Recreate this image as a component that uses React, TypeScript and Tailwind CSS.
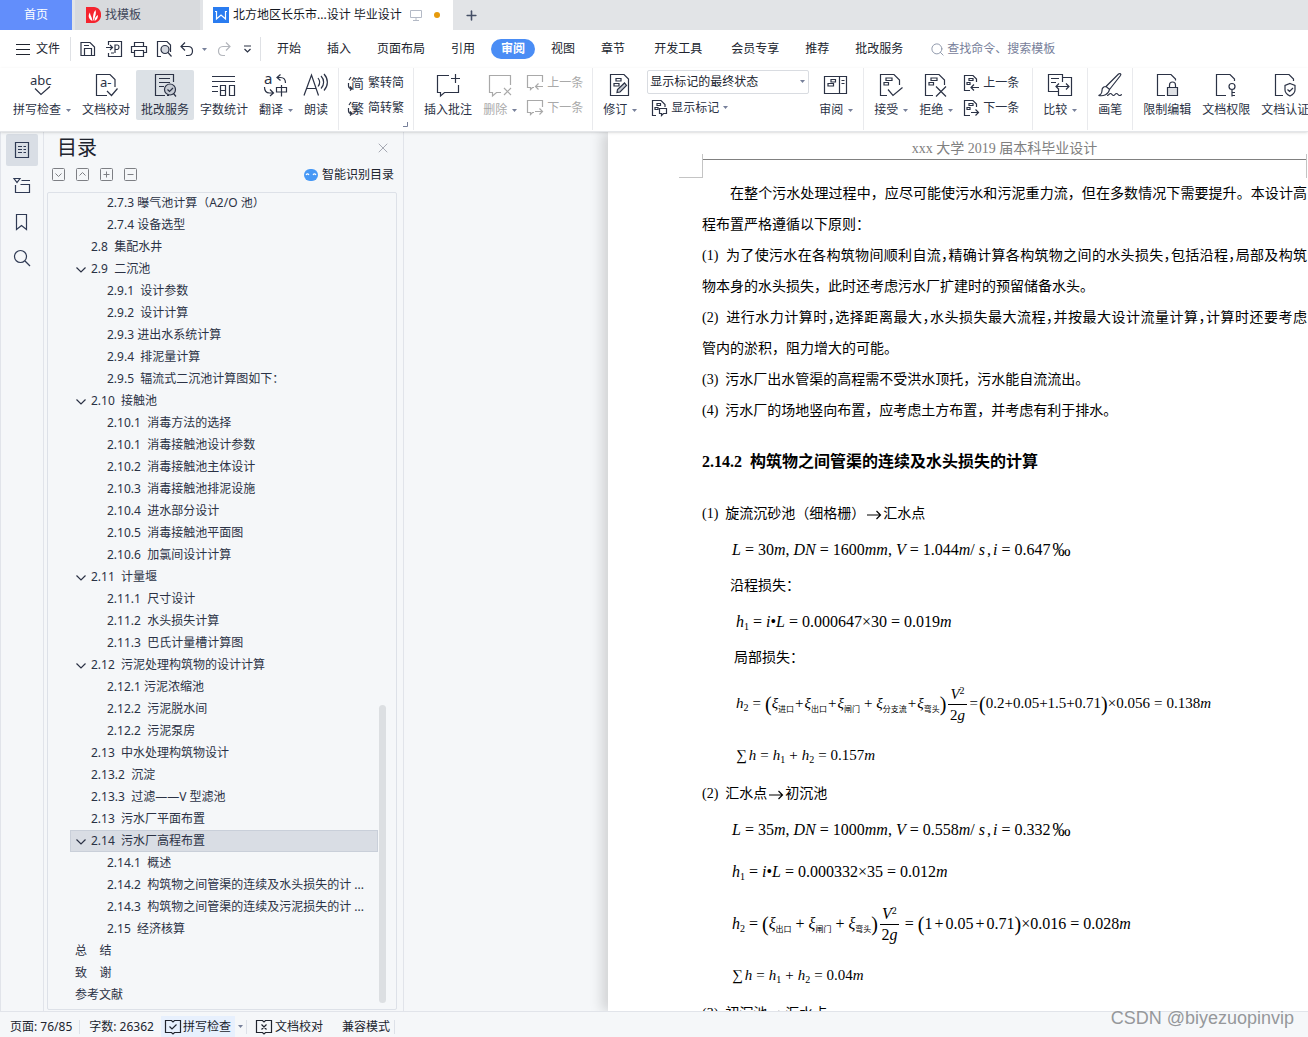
import { useState } from "react";
import type { ReactNode } from "react";
import { Plus, Search, X } from "lucide-react";
import clsx from "clsx";

type OutlineItem = {
  text: string;
  level: 0 | 1 | 2;
  open?: boolean;
};

const outline: OutlineItem[] = [
  { text: "2.7.3 曝气池计算（A2/O 池）", level: 2 },
  { text: "2.7.4 设备选型", level: 2 },
  { text: "2.8  集配水井", level: 1 },
  { text: "2.9  二沉池", level: 1, open: true },
  { text: "2.9.1  设计参数", level: 2 },
  { text: "2.9.2  设计计算", level: 2 },
  { text: "2.9.3 进出水系统计算", level: 2 },
  { text: "2.9.4  排泥量计算", level: 2 },
  { text: "2.9.5  辐流式二沉池计算图如下：", level: 2 },
  { text: "2.10  接触池", level: 1, open: true },
  { text: "2.10.1  消毒方法的选择", level: 2 },
  { text: "2.10.1  消毒接触池设计参数", level: 2 },
  { text: "2.10.2  消毒接触池主体设计", level: 2 },
  { text: "2.10.3  消毒接触池排泥设施", level: 2 },
  { text: "2.10.4  进水部分设计", level: 2 },
  { text: "2.10.5  消毒接触池平面图", level: 2 },
  { text: "2.10.6  加氯间设计计算", level: 2 },
  { text: "2.11  计量堰", level: 1, open: true },
  { text: "2.11.1  尺寸设计", level: 2 },
  { text: "2.11.2  水头损失计算", level: 2 },
  { text: "2.11.3  巴氏计量槽计算图", level: 2 },
  { text: "2.12  污泥处理构筑物的设计计算", level: 1, open: true },
  { text: "2.12.1 污泥浓缩池", level: 2 },
  { text: "2.12.2  污泥脱水间", level: 2 },
  { text: "2.12.2  污泥泵房", level: 2 },
  { text: "2.13  中水处理构筑物设计", level: 1 },
  { text: "2.13.2  沉淀", level: 1 },
  { text: "2.13.3  过滤——V 型滤池", level: 1 },
  { text: "2.13  污水厂平面布置", level: 1 },
  { text: "2.14  污水厂高程布置", level: 1, open: true },
  { text: "2.14.1  概述", level: 2 },
  { text: "2.14.2  构筑物之间管渠的连续及水头损失的计 ...", level: 2 },
  { text: "2.14.3  构筑物之间管渠的连续及污泥损失的计 ...", level: 2 },
  { text: "2.15  经济核算", level: 2 },
  { text: "总    结", level: 0 },
  { text: "致    谢", level: 0 },
  { text: "参考文献", level: 0 },
];

const levelPadding = { 0: "pl-1", 1: "pl-5", 2: "pl-9" };

const menuTabs = [
  "开始",
  "插入",
  "页面布局",
  "引用",
  "审阅",
  "视图",
  "章节",
  "开发工具",
  "会员专享",
  "推荐",
  "批改服务",
];

// full lines run to the right margin, like justified print
const paragraphs = [
  { text: "在整个污水处理过程中，应尽可能使污水和污泥重力流，但在多数情况下需要提升。本设计高", full: true, indent: true },
  { text: "程布置严格遵循以下原则：" },
  { text: "(1)\u00a0 为了使污水在各构筑物间顺利自流，精确计算各构筑物之间的水头损失，包括沿程，局部及构筑", full: true, tight: true },
  { text: "物本身的水头损失，此时还考虑污水厂扩建时的预留储备水头。" },
  { text: "(2)\u00a0 进行水力计算时，选择距离最大，水头损失最大流程，并按最大设计流量计算，计算时还要考虑", full: true, tight: true },
  { text: "管内的淤积，阻力增大的可能。" },
  { text: "(3)\u00a0 污水厂出水管渠的高程需不受洪水顶托，污水能自流流出。" },
  { text: "(4)\u00a0 污水厂的场地竖向布置，应考虑土方布置，并考虑有利于排水。" },
];

/* ---------- icons ---------- */

function Icon({ size = 24, children, className }: { size?: number; children: ReactNode; className?: string }) {
  return (
    <svg
      width={size}
      height={size}
      viewBox={`0 0 ${size} ${size}`}
      fill="none"
      stroke="currentColor"
      strokeWidth={1.2}
      className={clsx("shrink-0 overflow-visible", className)}
      aria-hidden="true"
    >
      {children}
    </svg>
  );
}

function Caret() {
  return (
    <svg width="5" height="3" viewBox="0 0 5 3" className="shrink-0 fill-[#77809a]" aria-hidden="true">
      <path d="M0 0h5L2.5 3z" />
    </svg>
  );
}

const SpellIcon = () => (
  <Icon>
    <text x="0" y="12" fontSize="13" fill="currentColor" stroke="none" fontFamily="Noto Sans">
      abc
    </text>
    <path d="M5 15.5l6 6 9-8" />
  </Icon>
);

const ProofIcon = () => (
  <Icon>
    <path d="M13 22.5H2.5v-21H16l5 5V14M13 18l4.500 4.500 6-7" />
    <text x="6" y="14" fontSize="13" fill="currentColor" stroke="none" fontFamily="Noto Sans">
      a-
    </text>
  </Icon>
);

const ReviewServiceIcon = () => (
  <Icon>
    <path d="M12 22.5H2.5v-21h18V9M6 5.500h11M6 9.500h11M6 13.500h5" />
    <circle cx="17" cy="16.500" r="5.500" fill="#c5cad2" />
    <path d="M14.500 16.500l2 2 3.500-3.500M20.500 20.500l2.500 3M14 22.500h2" />
  </Icon>
);

const WordCountIcon = () => (
  <Icon>
    <path d="M0 3.500h23M0 8.500h23M0 13.500h6M0 18.500h6M8.500 12.500h5v10h-5zM8.500 17.500h5M17.500 12.500h5v10h-5z" />
  </Icon>
);

const TranslateIcon = () => (
  <Icon>
    <text x="0" y="11" fontSize="15" fill="currentColor" stroke="none" fontFamily="Noto Sans">
      a
    </text>
    <path d="M16.500 1.500l-3.500 3 3.500 3M13 4.500h3.500c3 0 5 2 5 5.500M.5 14c0 4 2 6 5 6H9M6 16.500L9.500 20 6 23" />
    <path d="M12.500 14.500h10v4.500h-10zM17.500 12v11.500" />
  </Icon>
);

const ReadIcon = () => (
  <Icon>
    <path d="M0 22.500L7.500 2l7 20.500M2.500 15.500H12M14 5c2 2.500 2 6 0 8.500M17 3c3.500 3.500 3.500 9 0 12.500M20 1c4.500 5 4.500 11.500 0 16.500" />
  </Icon>
);

function ConvertIcon({ glyph }: { glyph: string }) {
  return (
    <Icon size={16}>
      <text x="3" y="13" fontSize="13" fill="currentColor" stroke="none" fontFamily="Noto Sans CJK SC">
        {glyph}
      </text>
      <path d="M.5 8v3c0 2 1 2.500 3 2.500M2 11.500l2 2-2 2M3 2L1 5" />
    </Icon>
  );
}

const CommentAddIcon = () => (
  <Icon>
    <path d="M13 2.500H1.500v17H4.500v3.500l4-3.500h14V12M19.500 1v9M15 5.500h9" />
  </Icon>
);

const CommentDeleteIcon = () => (
  <Icon>
    <path d="M13 19.500H8.500l-4 3.500v-3.500h-3v-17h21V12M16 15l7 7M23 15l-7 7" />
  </Icon>
);

const CommentPrevIcon = () => (
  <Icon size={16}>
    <path d="M7 12.500H5.500l-2 2v-2h-3v-12h15V7M16 11.500H8.500M11.500 8.500l-3 3 3 3" />
  </Icon>
);

const CommentNextIcon = () => (
  <Icon size={16}>
    <path d="M7 12.500H5.500l-2 2v-2h-3v-12h15V7M8 11.500h7.500M12.500 8.500l3 3-3 3" />
  </Icon>
);

const TrackIcon = () => (
  <Icon>
    <path d="M2.500 1.500H16l4.500 4.500v16.500h-18zM8 5.500h5v2.500H8zM6 10.500h5V13H6z" />
    <path d="M9 19.500l.5-3 7-6.500 2 2.500-6.500 6.500z" fill="#c5cad2" />
  </Icon>
);

const ShowMarksIcon = () => (
  <Icon size={16}>
    <path d="M5 15.500H1.500v-15H10l4 4V7M6 3.500h3.500v2H6zM4 7.500h3v2H4zM8.500 8.500h7v5h-3l-2 2v-2h-2z" />
  </Icon>
);

const PaneIcon = () => (
  <Icon>
    <path d="M.5 3.500h22v17H.5zM15.500 3.500v17M17.500 7.500h3M17.500 10.500h3M7 6.500h4.500v2.500H7zM4 10.500h5.500V13H4z" />
  </Icon>
);

const AcceptIcon = () => (
  <Icon>
    <path d="M8 22.500H1.500v-21H15l5.500 5.500v5M9 16.500l5 6 9.500-8" />
    <path d="M7 5h6v2.500H7zM5 9.500h4.500V12H5z" />
  </Icon>
);

const RejectIcon = () => (
  <Icon>
    <path d="M9 22.500H1.500v-21H15l5.500 5.500v5M12 13.500l10 10M22 13.500l-10 10" />
    <path d="M7 5h6v2.500H7zM5 9.500h4.500V12H5z" />
  </Icon>
);

const PrevChangeIcon = () => (
  <Icon size={16}>
    <path d="M7 15.500H1.500V.5H10l3.500 3.500v3M6 3.500h4v2H6zM4 7.500h3v2H4zM16 12.500H8.500M11 9.500l-3 3 3 3" />
  </Icon>
);

const NextChangeIcon = () => (
  <Icon size={16}>
    <path d="M7 15.500H1.500V.5H10l3.500 3.500v3M6 3.500h4v2H6zM4 7.500h3v2H4zM8 12.500h7.500M12.500 9.500l3 3-3 3" />
  </Icon>
);

const CompareIcon = () => (
  <Icon>
    <path d="M10 18.500H.5v-17h14V9M14.500 4.500h9v18h-13v-7M3 5.500h8M3 9.500h5M8 13.500h13M11 10.500l-3 3 3 3M18 10.500l3 3-3 3" />
  </Icon>
);

const BrushIcon = () => (
  <Icon>
    <path d="M8 13.500L20.500 1c1.500-1 3 0 2 1.500L11.500 16.500zM8 13.500c-3 0-4 2-4 4s-1.500 4.500-3.500 5c5 1 10-1 11-6M9 22.500c2 0 2-2 3.500-2s1.500 2 3 2 1.500-2 3-2 1.500 2 3 2 1.500-1 2.500-1" />
  </Icon>
);

const LockDocIcon = () => (
  <Icon>
    <path d="M10 22.500H2.500v-21H16l4.500 4.500v1.500" />
    <path d="M14.500 14.500V12c0-4 6-4 6 0v2.500" />
    <path d="M12.500 14.500h10v8h-10z" fill="#dfe1e5" />
  </Icon>
);

const KeyDocIcon = () => (
  <Icon>
    <path d="M12 22.500H2.500v-21H16l4.500 4.500V8M18 17v6.500M18 19.500h3M18 22.500h3" />
    <circle cx="18" cy="13.500" r="3" />
  </Icon>
);

const ShieldDocIcon = () => (
  <Icon>
    <path d="M10 22.500H2.500v-21H16l4.500 4.500V8" />
    <path d="M17 10.500l5 2v4.500c0 3-2 4.500-5 6-3-1.500-5-3-5-6v-4.500zM14.500 16.500l2 2 3.500-3.500" />
  </Icon>
);

/* ---------- ribbon parts ---------- */

type RibbonButtonProps = {
  icon: ReactNode;
  label: string;
  caret?: boolean;
  active?: boolean;
  disabled?: boolean;
};

function RibbonButton({ icon, label, caret, active, disabled }: RibbonButtonProps) {
  return (
    <button
      type="button"
      disabled={disabled}
      className={clsx(
        "flex h-[50px] shrink-0 flex-col items-center gap-[5px] px-[5px] pt-[3px]",
        active && "rounded-xs bg-[#dce1e6]",
        disabled ? "text-[#a9a9a9]" : "text-[#2b3245]"
      )}
    >
      {icon}
      <span className="flex items-center gap-[5px] leading-4">
        {label}
        {caret ? <Caret /> : null}
      </span>
    </button>
  );
}

function SmallButton({ icon, label, caret, disabled }: RibbonButtonProps) {
  return (
    <button
      type="button"
      disabled={disabled}
      className={clsx(
        "flex h-[25px] items-center gap-1 px-1 leading-4",
        disabled ? "text-[#a9a9a9]" : "text-[#2b3245]"
      )}
    >
      {icon}
      {label}
      {caret ? <Caret /> : null}
    </button>
  );
}

const Divider = () => <div className="mx-1 -mt-0.5 h-[62px] w-px shrink-0 bg-[#e9eaed]" />;

function TabBar() {
  return (
    <div className="flex h-[30px] shrink-0 bg-[#e2e4e7]">
      <button type="button" className="w-[72px] bg-[#628efb] text-white">
        首页
      </button>
      <button type="button" className="ml-[3px] flex w-[125px] items-center gap-1 bg-[#d8dadd] pl-[11px] text-[#3f475a]">
        <svg width="15" height="16" viewBox="0 0 15 16" aria-hidden="true">
          <path d="M0 0h8c10 1 9 15 0 16H0z" fill="#f5242f" />
          <path
            d="M6.500 14C2 12 2 8 4 5.500c0 3 2 4 2.500 8.500zM7.500 14c-1-4 0-9 2-11 1 3 0 6-2 11zM8.500 14c0-3 1.500-5 3.500-6 0 3-1 5-3.500 6z"
            fill="#fff"
          />
        </svg>
        找模板
      </button>
      <button type="button" className="ml-[3px] flex w-[250px] items-center bg-white pl-[10px] text-[#14181f]">
        <svg width="16" height="16" viewBox="0 0 16 16" className="mr-1" aria-hidden="true">
          <path d="M0 0h16v16H0z" fill="#2a7cf0" />
          <path d="M2 4.500h1.500V12L8 8l4.500 4V4.500H14" fill="none" stroke="#fff" strokeWidth="1.200" />
        </svg>
        北方地区长乐市...设计 毕业设计
        <svg width="12" height="12" viewBox="0 0 12 12" className="ml-2 fill-none stroke-[#b4bac6]" aria-hidden="true">
          <path d="M.5 1.500h11v7H.5zM6 8.500v3M3 11.500h6" />
        </svg>
        <span className="ml-3 size-1.5 rounded-full bg-[#e69a0c]" />
      </button>
      <button type="button" aria-label="新建" className="ml-[11px] text-[#454f66]">
        <Plus size={15} strokeWidth={2.5} />
      </button>
    </div>
  );
}

function MenuRow() {
  const [active, setActive] = useState("审阅");

  return (
    <div className="flex h-[38px] shrink-0 items-center text-[#20242e]">
      <button type="button" className="flex items-center gap-1.5 pl-4">
        <Icon size={14}>
          <path d="M0 2.500h14M0 7.500h14M0 12.500h14" />
        </Icon>
        文件
      </button>
      <div className="ml-[10px] h-6 w-px bg-[#dfe1e5]" />
      <div className="flex items-center pl-1 text-[#2b3245]">
        <button type="button" aria-label="保存" className="px-[5px]">
          <Icon size={16}>
            <path d="M1 14.500V1.500h9L14.500 6v8.500zM4.500 14.500v-7h7v7M4 4.500h5" />
          </Icon>
        </button>
        <button type="button" aria-label="输出为PDF" className="px-[5px]">
          <Icon size={16}>
            <path d="M2.500 4V.5h13v15h-13V12M0 6.500h6M4 4l2.500 2.500L4 9M9 12V4h2.500c2 0 2 4 0 4.500H9M5 12h3" />
          </Icon>
        </button>
        <button type="button" aria-label="打印" className="px-1">
          <Icon size={16}>
            <path d="M3.500 5V1.500h9V5M3.500 11.500h-3v-6h15v6h-3M3.500 9.500h9v6h-9z" />
          </Icon>
        </button>
        <button type="button" aria-label="打印预览" className="pr-1 pl-[5px]">
          <Icon size={16}>
            <path d="M5 15.500H1.500V.5H11l3.500 3.500v7" />
            <circle cx="9" cy="8.500" r="4" fill="#d4d8df" />
            <path d="M12 11.500l3.500 4" />
          </Icon>
        </button>
        <button type="button" aria-label="撤销" className="flex items-center gap-1.5 pl-1">
          <Icon size={16}>
            <path d="M5 1.500l-4 4 4 4M1 5.500h7c6 0 6 9 0 9H6" />
          </Icon>
          <Caret />
        </button>
        <button type="button" aria-label="恢复" className="pl-2 text-[#b3b6bc]">
          <Icon size={16}>
            <path d="M11 1.500l4 4-4 4M15 5.500H8c-6 0-6 9 0 9h2" />
          </Icon>
        </button>
        <button type="button" aria-label="自定义" className="pl-3">
          <Icon size={9}>
            <path d="M1 1h7M1.500 4L4.500 7l3-3" />
          </Icon>
        </button>
      </div>
      <div className="ml-2 h-6 w-px bg-[#dfe1e5]" />
      <nav className="ml-1.5 flex gap-1.5">
        {menuTabs.map((tab) => (
          <button
            key={tab}
            type="button"
            onClick={() => setActive(tab)}
            className={clsx(
              "h-5 shrink-0 rounded-full",
              tab === "开发工具" ? "px-[13px]" : "px-2.5",
              tab === active && "bg-[#4a8df5] font-bold text-white"
            )}
          >
            {tab}
          </button>
        ))}
      </nav>
      <label className="ml-[17px] flex items-center gap-0.5 text-[#8b94a8]">
        <Search size={15} strokeWidth={1.5} />
        <input
          type="text"
          aria-label="查找"
          placeholder="查找命令、搜索模板"
          className="w-40 outline-none placeholder:text-[#77809a]"
        />
      </label>
    </div>
  );
}

function Ribbon() {
  return (
    <div className="z-10 flex h-16 shrink-0 gap-px overflow-hidden border-b border-[#e4e6e9] bg-white pt-0.5 pl-2 shadow-sm">
      <RibbonButton icon={<SpellIcon />} label="拼写检查" caret />
      <RibbonButton icon={<ProofIcon />} label="文档校对" />
      <RibbonButton icon={<ReviewServiceIcon />} label="批改服务" active />
      <RibbonButton icon={<WordCountIcon />} label="字数统计" />
      <RibbonButton icon={<TranslateIcon />} label="翻译" caret />
      <RibbonButton icon={<ReadIcon />} label="朗读" />
      <Divider />
      <div className="relative shrink-0">
        <SmallButton icon={<ConvertIcon glyph="简" />} label="繁转简" />
        <SmallButton icon={<ConvertIcon glyph="繁" />} label="简转繁" />
        <svg
          width="5"
          height="5"
          viewBox="0 0 5 5"
          className="absolute right-0 bottom-1 stroke-[#77809a]"
          fill="none"
          aria-hidden="true"
        >
          <path d="M4.500 0v4.500H0" />
        </svg>
      </div>
      <Divider />
      <RibbonButton icon={<CommentAddIcon />} label="插入批注" />
      <RibbonButton icon={<CommentDeleteIcon />} label="删除" caret disabled />
      <div className="shrink-0">
        <SmallButton icon={<CommentPrevIcon />} label="上一条" disabled />
        <SmallButton icon={<CommentNextIcon />} label="下一条" disabled />
      </div>
      <Divider />
      <RibbonButton icon={<TrackIcon />} label="修订" caret />
      <div className="mx-1 w-[162px] shrink-0">
        <div className="relative mb-px">
          <select
            aria-label="显示标记的最终状态"
            className="block h-6 w-full appearance-none rounded-xs border border-[#d9dce1] bg-white pl-0.5 text-[#20242e]"
          >
            <option>显示标记的最终状态</option>
          </select>
          <span className="pointer-events-none absolute top-2.5 right-1">
            <Caret />
          </span>
        </div>
        <SmallButton icon={<ShowMarksIcon />} label="显示标记" caret />
      </div>
      <RibbonButton icon={<PaneIcon />} label="审阅" caret />
      <Divider />
      <RibbonButton icon={<AcceptIcon />} label="接受" caret />
      <RibbonButton icon={<RejectIcon />} label="拒绝" caret />
      <div className="mr-1 shrink-0">
        <SmallButton icon={<PrevChangeIcon />} label="上一条" />
        <SmallButton icon={<NextChangeIcon />} label="下一条" />
      </div>
      <Divider />
      <RibbonButton icon={<CompareIcon />} label="比较" caret />
      <Divider />
      <RibbonButton icon={<BrushIcon />} label="画笔" />
      <Divider />
      <RibbonButton icon={<LockDocIcon />} label="限制编辑" />
      <RibbonButton icon={<KeyDocIcon />} label="文档权限" />
      <RibbonButton icon={<ShieldDocIcon />} label="文档认证" />
    </div>
  );
}

/* ---------- left side ---------- */

function Rail() {
  return (
    <div className="flex w-11 shrink-0 flex-col gap-1 border-x border-[#e1e4ea] pt-0.5 pl-[5px] text-[#2f3a54]">
      <button type="button" aria-label="目录" className="grid size-8 place-items-center rounded-xs bg-[#d9dee5]">
        <Icon size={16}>
          <path d="M1.500.5h13v15h-13zM4 4.500h4M4 7.500h4M4 10.500h4M9.500 4.500H12M9.500 7.500H12M9.500 10.500H12" />
        </Icon>
      </button>
      <button type="button" aria-label="章节" className="grid size-8 place-items-center">
        <Icon size={16}>
          <path d="M0 .5h6L3 4.500zM7.500 2.500H16M1.500 7v7.500h14v-8h-9" />
        </Icon>
      </button>
      <button type="button" aria-label="书签" className="grid size-8 place-items-center">
        <Icon size={16}>
          <path d="M2.500.5h10v15l-5-4-5 4z" />
        </Icon>
      </button>
      <button type="button" aria-label="查找" className="grid size-8 place-items-center">
        <Icon size={16}>
          <circle cx="6.500" cy="6.500" r="6" />
          <path d="M11 11l5 5" />
        </Icon>
      </button>
    </div>
  );
}

function BoxButton({ label, d }: { label: string; d: string }) {
  return (
    <button type="button" aria-label={label}>
      <svg width="13" height="13" viewBox="0 0 13 13" fill="none" stroke="#7d7f84" aria-hidden="true">
        <rect x=".5" y=".5" width="12" height="12" rx="1" />
        <path d={d} />
      </svg>
    </button>
  );
}

function OutlinePanel() {
  const [selected, setSelected] = useState(29);

  return (
    <aside className="flex w-[360px] shrink-0 flex-col border-r border-[#e1e4ea] text-[#2b3245]">
      <div className="flex h-8 shrink-0 items-center justify-between pr-3 pl-[13px]">
        <h2 className="text-xl leading-8 text-[#20242e]">目录</h2>
        <button type="button" aria-label="关闭" className="text-[#7d8290]">
          <X size={16} strokeWidth={1} />
        </button>
      </div>
      <div className="flex h-5 shrink-0 items-center gap-[11px] pr-[9px] pl-2">
        <BoxButton label="展开" d="M3.500 5.500l3 3 3-3" />
        <BoxButton label="收起" d="M3.500 7.500l3-3 3 3" />
        <BoxButton label="增加级别" d="M3.500 6.500h6M6.500 3.500v6" />
        <BoxButton label="降低级别" d="M3.500 6.500h6" />
        <button type="button" className="ml-auto flex items-center gap-1 pt-px text-[#20242e]">
          <svg width="14" height="12" viewBox="0 0 14 12" aria-hidden="true">
            <rect width="14" height="12" rx="6" fill="#4798f5" />
            <path d="M2 6c1-1.500 2-1.500 3 0M9 6c1-1.500 2-1.500 3 0" stroke="#fff" strokeWidth="1.200" fill="none" />
          </svg>
          智能识别目录
        </button>
      </div>
      <div className="relative mt-2 mr-1.5 mb-px ml-[3px] min-h-0 flex-1 rounded-xs border border-[#dde1e8] pt-1">
        <div className="h-full overflow-hidden">
          <ul className="-mt-[5px] mr-[18px] ml-[22px]">
            {outline.map((item, index) => (
              <li key={index}>
                <button
                  type="button"
                  onClick={() => setSelected(index)}
                  className={clsx(
                    "relative block h-[22px] w-full border text-left leading-5 whitespace-pre",
                    levelPadding[item.level],
                    selected === index ? "border-[#c9cfd9] bg-[#d9dde4]" : "border-transparent"
                  )}
                >
                  {item.open ? (
                    <svg
                      width="10"
                      height="6"
                      viewBox="0 0 10 6"
                      className="absolute top-2 left-[5px] fill-none stroke-[#2b3245]"
                      aria-hidden="true"
                    >
                      <path d="M.5.5L5 5 9.500.5" strokeWidth="1.200" />
                    </svg>
                  ) : null}
                  {item.text}
                </button>
              </li>
            ))}
          </ul>
        </div>
        <div className="absolute right-2.5 bottom-1.5 h-[298px] w-[7px] rounded-full bg-[#dcdfe2]" />
      </div>
    </aside>
  );
}

/* ---------- document ---------- */

const Op = ({ children }: { children: ReactNode }) => <span className="mx-1">{children}</span>;

const Sub = ({ children }: { children: ReactNode }) => (
  <span className="relative top-1 text-[10px] not-italic">{children}</span>
);

const Paren = ({ children }: { children: ReactNode }) => <span className="text-xl leading-8">{children}</span>;

const Arrow = () => (
  <svg
    width="16"
    height="10"
    viewBox="0 0 16 10"
    className="mx-px inline-block"
    fill="none"
    stroke="currentColor"
    aria-hidden="true"
  >
    <path d="M1 5h13.500M10.500 1l4 4-4 4" strokeWidth="1.200" />
  </svg>
);

function VelocityHead() {
  return (
    <span className="mx-0.5 inline-flex flex-col items-center">
      <span className="border-b border-black px-0.5 leading-5">
        <i>V</i>
        <sup className="text-[10px]">2</sup>
      </span>
      <span className="leading-5">
        2<i>g</i>
      </span>
    </span>
  );
}

function Xi({ name }: { name: string }) {
  return (
    <span className="inline-flex items-center">
      <i>ξ</i>
      <span className="mt-3 text-[8px] leading-3">{name}</span>
    </span>
  );
}

function Flow({ length, dn, v, i }: { length: string; dn: string; v: string; i: string }) {
  return (
    <p className="flex h-10 items-center pl-[30px] text-base">
      <i>L</i>
      <Op>=</Op>
      {length}
      <i>m</i>
      <span className="mr-1">,</span>
      <i>DN</i>
      <Op>=</Op>
      {dn}
      <i>mm</i>
      <span className="mr-1">,</span>
      <i>V</i>
      <Op>=</Op>
      {v}
      <i>m</i>/<i className="ml-1">s</i>
      <span className="mx-0.5">,</span>
      <i>i</i>
      <Op>=</Op>
      {i}
      <span className="ml-0.5 text-lg leading-6">‰</span>
    </p>
  );
}

function SumRow({ total }: { total: string }) {
  return (
    <p className="flex h-11 items-center text-[15px]">
      ∑<i className="ml-0.5">h</i>
      <Op>=</Op>
      <i>h</i>
      <Sub>1</Sub>
      <Op>+</Op>
      <i>h</i>
      <Sub>2</Sub>
      <Op>=</Op>
      {total}
      <i>m</i>
    </p>
  );
}

function FrictionRow({ slope, length, total }: { slope: string; length: string; total: string }) {
  return (
    <>
      <i>h</i>
      <Sub>1</Sub>
      <Op>=</Op>
      <i>i</i>•<i>L</i>
      <Op>=</Op>
      {slope}×{length}
      <Op>=</Op>
      {total}
      <i>m</i>
    </>
  );
}

function DocumentPage() {
  return (
    <article className="min-w-0 flex-1 overflow-hidden bg-white pr-px pl-[94px] font-['Liberation_Serif','Noto_Sans_CJK_SC',serif] text-sm whitespace-nowrap text-black shadow-[-6px_0_12px_rgba(0,0,0,0.15)]">
      <header className="relative h-7 border-b border-[#808080] pt-[7px] text-center leading-5 text-[#808080]">
        xxx 大学 2019 届本科毕业设计
        <span className="absolute top-[22px] -left-[23px] size-6 border-r border-b border-[#c4c4c4]" />
        <span className="absolute top-[22px] right-0 h-6 w-px bg-[#c4c4c4]" />
      </header>
      <div className="pt-[18px] leading-[31px]">
        {paragraphs.map((line) => (
          <p
            key={line.text}
            className={clsx(
              line.indent && "pl-7",
              line.full && "[text-align-last:justify]",
              line.tight && "[font-feature-settings:'halt']"
            )}
          >
            {line.text}
          </p>
        ))}
      </div>
      <h3 className="text-base leading-[72px] font-bold whitespace-pre">2.14.2  构筑物之间管渠的连续及水头损失的计算</h3>
      <p className="h-8 leading-8 whitespace-pre">
        (1)  旋流沉砂池（细格栅）
        <Arrow />
        汇水点
      </p>
      <Flow length="30" dn="1600" v="1.044" i="0.647" />
      <p className="h-8 pl-7 leading-8">沿程损失：</p>
      <p className="flex h-10 items-center pl-[34px] text-base">
        <FrictionRow slope="0.000647" length="30" total="0.019" />
      </p>
      <p className="h-8 pl-8 leading-8">局部损失：</p>
      <p className="flex h-[60px] items-center pl-[34px] text-[15px]">
        <i>h</i>
        <Sub>2</Sub>
        <Op>=</Op>
        <Paren>(</Paren>
        <Xi name="进口" />
        <span className="mx-px">+</span>
        <Xi name="出口" />
        <span className="mx-px">+</span>
        <Xi name="闸门" />
        <Op>+</Op>
        <Xi name="分支流" />
        <span className="mx-px">+</span>
        <Xi name="弯头" />
        <Paren>)</Paren>
        <VelocityHead />
        <span className="mx-px">=</span>
        <Paren>(</Paren>0.2+0.05+1.5+0.71<Paren>)</Paren>×0.056<Op>=</Op>0.138<i>m</i>
      </p>
      <div className="pl-[34px]">
        <SumRow total="0.157" />
      </div>
      <p className="h-8 leading-8 whitespace-pre">
        (2)  汇水点
        <Arrow />
        初沉池
      </p>
      <Flow length="35" dn="1000" v="0.558" i="0.332" />
      <p className="flex h-11 items-center pl-[30px] text-base">
        <FrictionRow slope="0.000332" length="35" total="0.012" />
      </p>
      <p className="flex h-[60px] items-center pl-[30px] text-base">
        <i>h</i>
        <Sub>2</Sub>
        <Op>=</Op>
        <Paren>(</Paren>
        <Xi name="出口" />
        <Op>+</Op>
        <Xi name="闸门" />
        <Op>+</Op>
        <Xi name="弯头" />
        <Paren>)</Paren>
        <VelocityHead />
        <Op>=</Op>
        <Paren>(</Paren>1<span className="mx-0.5">+</span>0.05<span className="mx-0.5">+</span>0.71<Paren>)</Paren>×0.016
        <Op>=</Op>0.028<i>m</i>
      </p>
      <div className="pl-[30px]">
        <SumRow total="0.04" />
      </div>
      <p className="h-8 leading-8 whitespace-pre">
        (3)  初沉池
        <Arrow />
        汇水点
      </p>
    </article>
  );
}

function StatusBar() {
  return (
    <footer className="relative flex h-[26px] shrink-0 items-center border-t border-[#e1e4ea] bg-[#f5f7f9] pt-1 text-[#20242e]">
      <span className="pr-[7px] pl-2.5">页面: 76/85</span>
      <span className="h-3.5 w-px bg-[#dde1e8]" />
      <span className="pr-[7px] pl-[9px]">字数: 26362</span>
      <button type="button" className="flex h-[22px] items-center gap-0.5 bg-[#e7f0fd] px-1">
        <Icon size={16}>
          <path d="M6.500 13.500H.5v-12h6L8 3l1.500-1.500h6v12h-6L8 15zM4.500 7.500L7 10l4.500-4.500" />
        </Icon>
        拼写检查
      </button>
      <button type="button" aria-label="拼写检查选项" className="px-[3px]">
        <Caret />
      </button>
      <span className="h-3.5 w-px bg-[#dde1e8]" />
      <button type="button" className="ml-[9px] flex items-center gap-[3px]">
        <Icon size={16}>
          <path d="M6.500 13.500H.5v-12h6L8 3l1.500-1.500h6v12h-6L8 15zM5.500 5.500l5 5M10.500 5.500l-5 5" />
        </Icon>
        文档校对
      </button>
      <span className="mr-1 ml-[19px]">兼容模式</span>
      <span className="h-3.5 w-px bg-[#dde1e8]" />
      <span className="absolute right-3.5 bottom-[7px] font-['Liberation_Sans',sans-serif] text-lg leading-6 text-[#96989b]">
        CSDN @biyezuopinvip
      </span>
    </footer>
  );
}

export default function App() {
  return (
    <div className="flex h-screen flex-col overflow-hidden bg-white font-['Noto_Sans','Noto_Sans_CJK_SC',sans-serif] text-xs">
      <TabBar />
      <MenuRow />
      <Ribbon />
      <div className="flex min-h-0 flex-1 bg-[#f5f7f9]">
        <Rail />
        <OutlinePanel />
        <main className="flex min-w-0 flex-1 overflow-hidden pl-[204px]">
          <DocumentPage />
        </main>
      </div>
      <StatusBar />
    </div>
  );
}
